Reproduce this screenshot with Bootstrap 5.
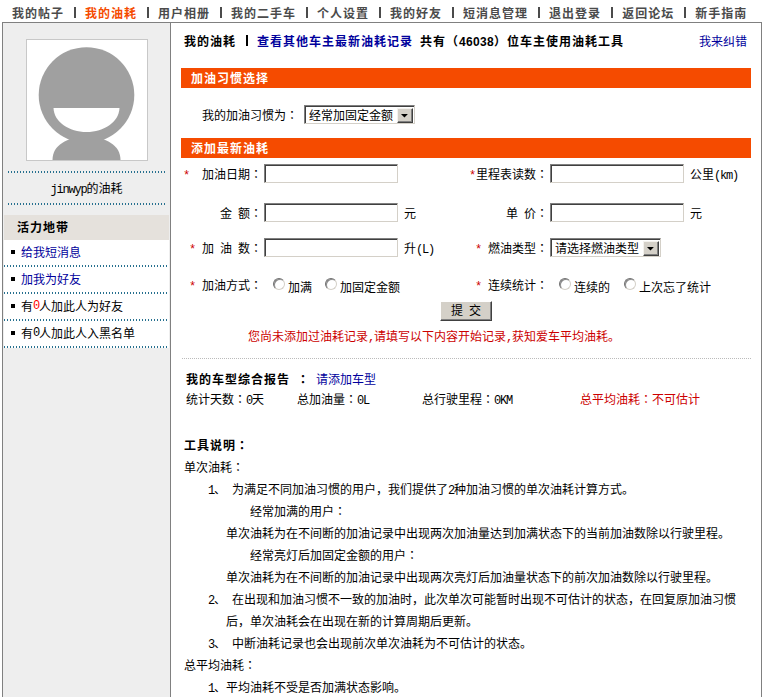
<!DOCTYPE html>
<html lang="zh-CN">
<head>
<meta charset="utf-8">
<meta name="viewport" content="width=device-width, initial-scale=1">
<title>我的油耗</title>
<link href="https://cdn.jsdelivr.net/npm/bootstrap@5.3.0/dist/css/bootstrap.min.css" rel="stylesheet">
<style>
html,body{height:697px;overflow:hidden}
body{font:12px/22px "Noto Sans CJK SC",sans-serif;color:#000;background:#fff}
a{text-decoration:none;color:#00009c}
b,.fat{font-weight:700;letter-spacing:1px}
.m{font-family:"Liberation Mono",monospace;font-size:12px;letter-spacing:-1.2px;line-height:1}
.fat .m{font-family:"Liberation Sans",sans-serif;font-size:12px;letter-spacing:.33px}
.t{font-family:"Noto Sans CJK TC",sans-serif;font-feature-settings:"locl" 0;line-height:1}
.topnav{height:22px;padding:2px 0 0 12px;color:#4b4b4b;line-height:21px;white-space:nowrap}
.topnav a{color:inherit}
.topnav a.on{color:#f54b00}
.pipe{width:21px;height:21px;display:flex;justify-content:center}
.pipe::before{content:"";width:2px;height:11px;background:currentColor;align-self:center}
.frame{margin-left:2px;width:760px;height:675px;border:1px solid #808080;border-bottom:0}
.side{width:168px;background:#eee;border-right:1px solid #808080;padding:16px 1px 0}
.face{width:122px;height:122px;border:1px solid #c8c8c8;margin-left:22px;background:#fff}
.dots{height:2px;background:repeating-linear-gradient(90deg,#27708f 0 1px,transparent 1px 3px)}
.who{height:30px;line-height:30px}
.zone{height:25px;line-height:24px;background:#e5e1dc;padding-left:13px;margin-top:10px}
.acts li{background:#fff;height:27px;display:flex;flex-direction:column}
.acts li>div{height:25px;line-height:22px;padding:0 0 2px 7px;display:flex;align-items:center}
.acts .m{line-height:22px}
.sq{width:4px;height:4px;background:#000;margin-right:6px}
.main{padding-left:10px}
.head{height:45px;padding:7px 14px 0 3px;line-height:21px}
.bar{width:570px;height:20px;background:#f54b00;color:#fff;line-height:19px;padding-left:10px}
.habit{height:50px;padding:3px 0 0 21px;line-height:19px}
.sunk{border:1px solid;border-color:#808080 #d4d0c8 #d4d0c8 #808080;box-shadow:inset 1px 1px #404040;background:#fff;height:19px;border-radius:0}
input.sunk{width:134px;outline:0}
.pick{width:111px;padding:2px 1px 1px 4px}
.pick select{appearance:none;border:0;padding:0;margin:-1px 0 0;background:none;font:12px/15px "Noto Sans CJK SC",sans-serif;color:#000;width:89px;height:15px;outline:0;white-space:nowrap}
.arrow{width:16px;height:15px;background:#d4d0c8;border:1px solid;border-color:#f4f2ee #404040 #404040 #f4f2ee;box-shadow:inset -1px -1px #808080}
.half{width:286px;height:19px}
.lab{width:83px;height:22px;padding-right:2px;word-spacing:3.3px;white-space:pre}
.lab .t{line-height:inherit}
.red{color:#c00}
.star{width:6px;height:22px;font:12px/26px "Liberation Mono",monospace;text-indent:-1px}
.s6{margin-right:6px}.s12{margin-right:12px}
.unit{padding-left:6px}
.r1{margin-top:6px}.r2{margin-top:20px}.r3{margin-top:16px}.r4{margin-top:18px}
.rad{appearance:none;width:12px;height:12px;border-radius:50%;border:1px solid;border-color:#707070 #d4d0c8 #d4d0c8 #707070;background:#fff;margin:-1px 3px 0 0;box-shadow:inset 1px 1px #8a8a8a}
.send{width:52px;height:20px;margin:7px 0 0 259px;background:#d4d0c8;border:1px solid;border-color:#fff #404040 #404040 #fff;box-shadow:inset -1px -1px #808080;line-height:14px;padding:0 0 2px;font-size:12px;word-spacing:3.3px;display:block}
.warn{height:37px;line-height:30px;padding-left:67px;white-space:nowrap}
.rule{width:569px;margin-left:1px;border-top:1px dotted #bbb}
.rep{padding:10px 0 0 5px;line-height:20px}
.tips{padding:25px 0 0 3px;white-space:nowrap}
.tips div{line-height:22px}
.tips .ln{height:22px}
.n{width:24px}
</style>
</head>
<body>
<nav class="topnav fat d-flex">
<a href="#">我的帖子</a><span class="pipe"></span><a href="#" class="on">我的油耗</a><span class="pipe"></span><a href="#">用户相册</a><span class="pipe"></span><a href="#">我的二手车</a><span class="pipe"></span><a href="#">个人设置</a><span class="pipe"></span><a href="#">我的好友</a><span class="pipe"></span><a href="#">短消息管理</a><span class="pipe"></span><a href="#">退出登录</a><span class="pipe"></span><a href="#">返回论坛</a><span class="pipe"></span><a href="#">新手指南</a>
</nav>
<div class="frame d-flex">
  <aside class="side flex-shrink-0">
    <div class="face"><svg class="d-block" width="120" height="120" viewBox="0 0 120 120"><circle cx="59.5" cy="55" r="47.8" fill="#a0a0a0"/><path d="M25.5 120C25.5 105 40 97 59.5 97S93.5 105 93.5 120Z" fill="#a0a0a0"/><path d="M26.5 68H92.5C92 82 77 92 59.5 92S27 82 26.5 68Z" fill="#fff"/></svg></div>
    <div class="dots mx-1" style="margin-top:10px"></div>
    <div class="who text-center"><span class="m">jinwyp</span>的油耗</div>
    <div class="dots mx-1"></div>
    <div class="zone fat">活力地带</div>
    <ul class="acts list-unstyled m-0">
      <li><div><i class="sq"></i><a href="#">给我短消息</a></div><span class="dots"></span></li>
      <li><div><i class="sq"></i><a href="#">加我为好友</a></div><span class="dots"></span></li>
      <li><div><i class="sq"></i>有<span class="m" style="color:#f00">0</span>人加此人为好友</div><span class="dots"></span></li>
      <li><div><i class="sq"></i>有<span class="m">0</span>人加此人入黑名单</div><span class="dots"></span></li>
    </ul>
  </aside>
  <main class="main flex-grow-1">
    <div class="head d-flex text-nowrap">
      <b>我的油耗</b><span class="pipe"></span><a href="#" class="fat">查看其他车主最新油耗记录</a>
      <span class="fat" style="margin-left:7px">共有（<span class="m">46038</span>）位车主使用油耗工具</span>
      <a href="#" class="ms-auto">我来纠错</a>
    </div>
    <div class="bar fat">加油习惯选择</div>
    <div class="habit d-flex align-items-center">
      <span>我的加油习惯为<span class="t">：</span></span>
      <div class="sunk pick d-flex" style="margin-left:6px"><select><option>经常加固定金额</option></select><svg class="arrow" viewBox="0 0 14 13"><path d="M3 5h7L6.5 8.5Z"/></svg></div>
    </div>
    <div class="bar fat">添加最新油耗</div>
    <form>
      <div class="d-flex r1">
        <div class="half d-flex align-items-center"><label class="lab d-flex justify-content-end"><span class="star red s12">*</span>加油日期<span class="t">：</span></label><input class="sunk"></div>
        <div class="half d-flex align-items-center"><label class="lab d-flex justify-content-end"><span class="star red">*</span>里程表读数<span class="t">：</span></label><input class="sunk"><span class="unit">公里<span class="m">(km)</span></span></div>
      </div>
      <div class="d-flex r2">
        <div class="half d-flex align-items-center"><label class="lab d-flex justify-content-end">金 额<span class="t">：</span></label><input class="sunk"><span class="unit">元</span></div>
        <div class="half d-flex align-items-center"><label class="lab d-flex justify-content-end">单 价<span class="t">：</span></label><input class="sunk"><span class="unit">元</span></div>
      </div>
      <div class="d-flex r3">
        <div class="half d-flex align-items-center"><label class="lab d-flex justify-content-end"><span class="star red s6">*</span>加 油 数<span class="t">：</span></label><input class="sunk"><span class="unit">升<span class="m">(L)</span></span></div>
        <div class="half d-flex align-items-center"><label class="lab d-flex justify-content-end"><span class="star red s6">*</span>燃油类型<span class="t">：</span></label><div class="sunk pick d-flex"><select><option>请选择燃油类型</option></select><svg class="arrow" viewBox="0 0 14 13"><path d="M3 5h7L6.5 8.5Z"/></svg></div></div>
      </div>
      <div class="d-flex r4">
        <div class="half d-flex align-items-center"><label class="lab d-flex justify-content-end"><span class="star red s6">*</span>加油方式<span class="t">：</span></label><input type="radio" class="rad" style="margin-left:9px"><span class="pt-1">加满</span><input type="radio" class="rad" style="margin-left:13px"><span class="pt-1">加固定金额</span></div>
        <div class="half d-flex align-items-center"><label class="lab d-flex justify-content-end"><span class="star red s6">*</span>连续统计<span class="t">：</span></label><input type="radio" class="rad" style="margin-left:9px"><span class="pt-1">连续的</span><input type="radio" class="rad" style="margin-left:14px"><span class="pt-1">上次忘了统计</span></div>
      </div>
      <button type="button" class="send">提 交</button>
      <div class="warn red">您尚未添加过油耗记录<span class="m">,</span>请填写以下内容开始记录<span class="m">,</span>获知爱车平均油耗。</div>
    </form>
    <div class="rule"></div>
    <div class="rep">
      <div class="d-flex"><b>我的车型综合报告</b><b class="t" style="margin:0 6px 0 7px;line-height:20px">：</b><a href="#">请添加车型</a></div>
      <div class="d-flex"><span style="width:111px">统计天数<span class="t">：</span><span class="m">0</span>天</span><span style="width:125px">总加油量<span class="t">：</span><span class="m">0L</span></span><span style="width:158px">总行驶里程<span class="t">：</span><span class="m">0KM</span></span><span class="red">总平均油耗<span class="t">：</span>不可估计</span></div>
    </div>
    <div class="tips">
      <div class="ln"><b>工具说明<span class="t">：</span></b></div>
      <div class="ln">单次油耗<span class="t">：</span></div>
      <div style="padding-left:24px">
        <div class="ln d-flex"><span class="n"><span class="m">1</span>、</span><span>为满足不同加油习惯的用户，我们提供了<span class="m">2</span>种加油习惯的单次油耗计算方式。</span></div>
        <div class="ln" style="padding-left:42px">经常加满的用户<span class="t">：</span></div>
        <div class="ln" style="padding-left:18px">单次油耗为在不间断的加油记录中出现两次加油量达到加满状态下的当前加油数除以行驶里程。</div>
        <div class="ln" style="padding-left:42px">经常亮灯后加固定金额的用户<span class="t">：</span></div>
        <div class="ln" style="padding-left:18px">单次油耗为在不间断的加油记录中出现两次亮灯后加油量状态下的前次加油数除以行驶里程。</div>
        <div class="ln d-flex"><span class="n"><span class="m">2</span>、</span>在出现和加油习惯不一致的加油时，此次单次可能暂时出现不可估计的状态，在回复原加油习惯</div>
        <div class="ln" style="padding-left:18px">后，单次油耗会在出现在新的计算周期后更新。</div>
        <div class="ln d-flex"><span class="n"><span class="m">3</span>、</span>中断油耗记录也会出现前次单次油耗为不可估计的状态。</div>
      </div>
      <div class="ln">总平均油耗<span class="t">：</span></div>
      <div class="ln" style="padding-left:24px"><span class="m">1</span>、平均油耗不受是否加满状态影响。</div>
    </div>
  </main>
</div>
<script src="https://cdn.jsdelivr.net/npm/bootstrap@5.3.0/dist/js/bootstrap.bundle.min.js"></script>
</body>
</html>
